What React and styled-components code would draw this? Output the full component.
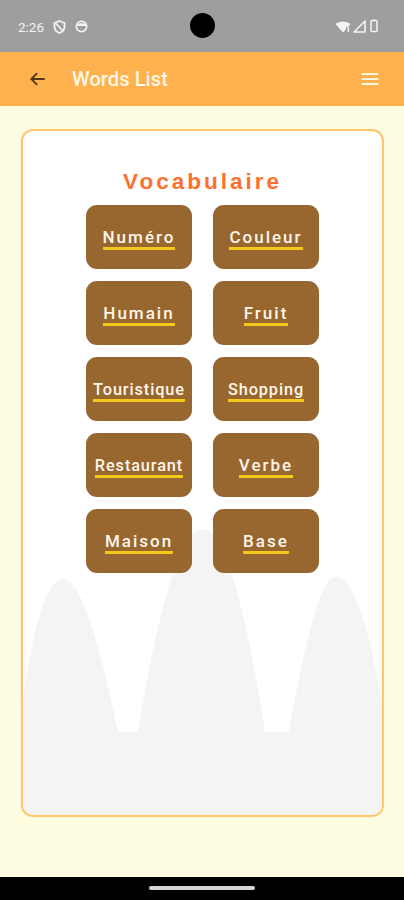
import React from "react";
import styled, { createGlobalStyle } from "styled-components";

const GlobalStyle = createGlobalStyle`
  html, body {
    margin: 0;
    padding: 0;
    background: #fffde1;
  }
  * {
    box-sizing: border-box;
  }
`;

const Screen = styled.div`
  width: 404px;
  height: 900px;
  display: flex;
  flex-direction: column;
  background: #fffde1;
  font-family: "Liberation Sans", Arial, sans-serif;
  overflow: hidden;
`;

const StatusBar = styled.div`
  height: 52px;
  flex-shrink: 0;
  background: #9e9e9e;
  display: flex;
  align-items: center;
  justify-content: space-between;
  padding: 0 24px 0 18px;
  color: #f4f4f4;
  position: relative;
`;

const StatusLeft = styled.div`
  display: flex;
  align-items: center;
  gap: 9px;
  font-family: Roboto, "Liberation Sans", sans-serif;
  font-size: 13.5px;
  padding-top: 1px;
`;

const StatusRight = styled.div`
  display: flex;
  align-items: center;
  gap: 2px;
`;

const Camera = styled.div`
  position: absolute;
  left: 190px;
  top: 13px;
  width: 25px;
  height: 25px;
  border-radius: 50%;
  background: #000;
`;

const AppBar = styled.header`
  height: 54px;
  flex-shrink: 0;
  background: #ffb14e;
  display: flex;
  align-items: center;
  padding: 0 22px 0 26px;
`;

const IconButton = styled.div`
  width: 24px;
  height: 24px;
  display: flex;
  align-items: center;
  justify-content: center;
`;

const Title = styled.h1`
  flex: 1;
  margin: 0 0 0 22px;
  font-family: Roboto, "Liberation Sans", sans-serif;
  font-weight: 500;
  font-size: 20px;
  color: #fff8e8;
  letter-spacing: 0.1px;
`;

const Main = styled.main`
  flex: 1;
  padding: 23px 20px 60px 21px;
  display: flex;
`;

const Card = styled.section`
  flex: 1;
  position: relative;
  background: #ffffff;
  border: 2px solid #ffc66c;
  border-radius: 12px;
  overflow: hidden;
  display: flex;
  flex-direction: column;
  align-items: center;
  padding-top: 38px;
`;

const Waves = styled.svg`
  position: absolute;
  left: 0;
  bottom: 0;
  width: 100%;
  height: 290px;
`;

const Heading = styled.h2`
  position: relative;
  margin: 0 0 10px;
  font-size: 22.5px;
  line-height: 26px;
  font-weight: 700;
  letter-spacing: 3px;
  color: #ff6f2e;
`;

const Grid = styled.div`
  position: relative;
  display: grid;
  grid-template-columns: repeat(2, 106px);
  column-gap: 21px;
  row-gap: 12px;
`;

const WordButton = styled.button`
  height: 64px;
  border: none;
  border-radius: 11px;
  background: #98672f;
  display: flex;
  align-items: center;
  justify-content: center;
  padding: 5px 0 0;
  cursor: pointer;
  font-family: Roboto, "Liberation Sans", sans-serif;
`;

const Label = styled.span`
  display: inline-block;
  color: #fff6ea;
  font-weight: 500;
  font-size: ${(p) => (p.$compact ? "16.3px" : "17px")};
  line-height: 17px;
  letter-spacing: ${(p) => (p.$compact ? "0.9px" : "2px")};
  padding-bottom: 1px;
  border-bottom: 3px solid #f5c81c;
`;

const NavBar = styled.div`
  height: 23px;
  flex-shrink: 0;
  background: #000;
  display: flex;
  align-items: center;
  justify-content: center;
`;

const Handle = styled.div`
  width: 106px;
  height: 4px;
  border-radius: 2px;
  background: #d6d6d6;
  margin-top: -2px;
`;

const words = [
  "Numéro",
  "Couleur",
  "Humain",
  "Fruit",
  "Touristique",
  "Shopping",
  "Restaurant",
  "Verbe",
  "Maison",
  "Base",
];

const compactWords = ["Touristique", "Restaurant", "Shopping"];

export default function App() {
  return (
    <>
      <GlobalStyle />
      <Screen>
        <StatusBar>
          <StatusLeft>
            <span>2:26</span>
            <svg width="13" height="14" viewBox="0 0 13 14">
              <path
                d="M6.5 1 L11.5 3 V7 C11.5 10 9 12 6.5 13 C4 12 1.5 10 1.5 7 V3 Z"
                fill="none"
                stroke="#f4f4f4"
                strokeWidth="1.8"
              />
              <path d="M3 3.5 L10 11" stroke="#f4f4f4" strokeWidth="1.8" />
            </svg>
            <svg width="13" height="13" viewBox="0 0 13 13">
              <circle cx="6.5" cy="6.5" r="5.2" fill="none" stroke="#f4f4f4" strokeWidth="1.6" />
              <path d="M2 6 H11 V5 C10 2.5 3 2.5 2 5 Z" fill="#f4f4f4" />
            </svg>
          </StatusLeft>
          <Camera />
          <StatusRight>
            <svg width="16" height="13" viewBox="0 0 16 13">
              <path d="M0.5 4 C4.5 0.5 11.5 0.5 15.5 4 L8 12.5 Z" fill="#f4f4f4" />
              <rect x="11" y="7" width="1.6" height="4" fill="#9e9e9e" />
              <rect x="12.6" y="7" width="1.4" height="5" fill="#f4f4f4" />
            </svg>
            <svg width="13" height="13" viewBox="0 0 13 13">
              <path d="M12 1 V12 H1 Z" fill="none" stroke="#f4f4f4" strokeWidth="1.6" strokeLinejoin="round" />
            </svg>
            <svg width="12" height="14" viewBox="0 0 12 14">
              <rect x="3" y="1.5" width="6" height="11" rx="1" fill="none" stroke="#f4f4f4" strokeWidth="1.5" />
              <rect x="5" y="0.5" width="2" height="1.2" fill="#f4f4f4" />
            </svg>
          </StatusRight>
        </StatusBar>

        <AppBar>
          <IconButton>
            <svg width="20" height="20" viewBox="0 0 24 24">
              <path
                d="M20 12 H4.5 M11 5 L4 12 L11 19"
                fill="none"
                stroke="#4f3818"
                strokeWidth="2.2"
              />
            </svg>
          </IconButton>
          <Title>Words List</Title>
          <IconButton>
            <svg width="22" height="22" viewBox="0 0 24 24">
              <path d="M3 6.5 H21 M3 12 H21 M3 17.5 H21" stroke="#fff6e0" strokeWidth="2.2" />
            </svg>
          </IconButton>
        </AppBar>

        <Main>
          <Card>
            <Waves viewBox="22 526 362 290" preserveAspectRatio="none">
              <path
                d="M22 816 L22 705 C30 640 44 580 62 580 C82 580 100 650 118 733 L138 733 C155 630 178 530 203 530 C228 530 250 630 266 733 L290 733 C306 650 320 578 338 578 C356 578 374 640 384 705 L384 816 Z"
                fill="#f4f4f5"
              />
            </Waves>
            <Heading>Vocabulaire</Heading>
            <Grid>
              {words.map((w) => (
                <WordButton key={w}>
                  <Label $compact={compactWords.includes(w)}>{w}</Label>
                </WordButton>
              ))}
            </Grid>
          </Card>
        </Main>

        <NavBar>
          <Handle />
        </NavBar>
      </Screen>
    </>
  );
}
